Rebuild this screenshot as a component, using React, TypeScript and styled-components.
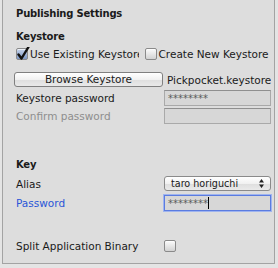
import styled, { createGlobalStyle } from "styled-components";

const GlobalStyle = createGlobalStyle`
  html, body {
    margin: 0;
    padding: 0;
    background: #e4e4e4;
  }
  body {
    font-family: "DejaVu Sans", "Liberation Sans", sans-serif;
    font-size: 10.5px;
    color: #1a1a1a;
  }
`;

const Panel = styled.div`
  box-sizing: border-box;
  margin-left: 2px;
  width: 273px;
  height: 264px;
  padding: 0 0 0 13px;
  background: #dddddd;
  border: 1px solid #a3a3a3;
  border-top: none;
  display: flex;
  flex-direction: column;
  overflow: hidden;
`;

const Title = styled.div<{ $top: number }>`
  margin-top: ${(p) => p.$top}px;
  height: 16px;
  line-height: 16px;
  font-weight: bold;
  font-size: 10px;
  letter-spacing: -0.2px;
  white-space: nowrap;
`;

const Row = styled.div<{ $top: number; $h: number }>`
  margin-top: ${(p) => p.$top}px;
  height: ${(p) => p.$h}px;
  display: grid;
  grid-template-columns: 148px 107px;
  align-items: center;
  white-space: nowrap;
`;

const ToggleRow = styled.div<{ $top: number }>`
  margin-top: ${(p) => p.$top}px;
  height: 14px;
  display: flex;
  align-items: center;
  gap: 6px;
  white-space: nowrap;
`;

const Toggle = styled.label<{ $w: number }>`
  width: ${(p) => p.$w}px;
  display: flex;
  align-items: center;
  gap: 2px;
  overflow: hidden;
`;

const Label = styled.span<{ $tone?: "dim" | "focus" }>`
  line-height: 14px;
  color: ${(p) =>
    p.$tone === "dim" ? "#8e8e8e" : p.$tone === "focus" ? "#2a56d8" : "#1a1a1a"};
`;

const Box = styled.span<{ $checked?: boolean }>`
  position: relative;
  flex: none;
  box-sizing: border-box;
  width: 12px;
  height: 12px;
  border: 1px solid #8a8a8a;
  border-radius: 2px;
  background: ${(p) =>
    p.$checked
      ? "linear-gradient(#c4d2ea, #7d98c6)"
      : "linear-gradient(#fbfbfb, #d2d2d2)"};
  box-shadow: inset 0 1px 0 rgba(255, 255, 255, 0.7);
`;

const Check = styled.svg`
  position: absolute;
  left: 0px;
  top: -3px;
  overflow: visible;
`;

const Button = styled.div`
  box-sizing: border-box;
  width: 149px;
  height: 15px;
  margin-left: -2px;
  border: 1px solid #808080;
  border-radius: 3px;
  background: linear-gradient(#ffffff, #f1f1f1 50%, #dedede 51%, #e9e9e9);
  text-align: center;
  line-height: 13px;
`;

const FileName = styled.span`
  margin-left: 3px;
  overflow: hidden;
`;

const Field = styled.div<{ $focus?: boolean }>`
  box-sizing: border-box;
  height: 16px;
  padding-left: 3px;
  background: #d7d7d7;
  border: 1px solid ${(p) => (p.$focus ? "#5b7ce0" : "#a9a9a9")};
  border-top-color: ${(p) => (p.$focus ? "#5b7ce0" : "#8f8f8f")};
  box-shadow: ${(p) => (p.$focus ? "0 0 0 1px #9fb4ef" : "none")};
  display: flex;
  align-items: center;
  font-size: 10px;
  color: #5a5a5a;
  letter-spacing: 0px;
`;

const Caret = styled.span`
  width: 1px;
  height: 12px;
  background: #000;
`;

const Popup = styled.div`
  box-sizing: border-box;
  height: 15px;
  padding: 0 6px 0 6px;
  border: 1px solid #8a8a8a;
  border-radius: 3px;
  background: linear-gradient(#ffffff, #f1f1f1 50%, #dedede 51%, #eaeaea);
  display: flex;
  align-items: center;
  justify-content: space-between;
  font-size: 9.6px;
`;

const CheckBox = ({ checked }: { checked?: boolean }) => (
  <Box $checked={checked}>
    {checked && (
      <Check width="12" height="14" viewBox="0 0 12 14">
        <path
          d="M1.5 8.5 L4.5 12.5 L11.5 1"
          fill="none"
          stroke="#111"
          strokeWidth="2.4"
          strokeLinecap="round"
          strokeLinejoin="round"
        />
      </Check>
    )}
  </Box>
);

const Arrows = () => (
  <svg width="5" height="9" viewBox="0 0 5 9">
    <path d="M2.5 0 L5 3.5 L0 3.5 Z M2.5 9 L5 5.5 L0 5.5 Z" fill="#222" />
  </svg>
);

export default function App() {
  return (
    <>
      <GlobalStyle />
      <Panel>
        <Title $top={6}>Publishing Settings</Title>
        <Title $top={7}>Keystore</Title>
        <ToggleRow $top={2}>
          <Toggle $w={123}>
            <CheckBox checked />
            <Label>Use Existing Keystore</Label>
          </Toggle>
          <Toggle $w={130}>
            <CheckBox />
            <Label>Create New Keystore</Label>
          </Toggle>
        </ToggleRow>
        <Row $top={11} $h={15}>
          <Button>Browse Keystore</Button>
          <FileName>Pickpocket.keystore</FileName>
        </Row>
        <Row $top={3} $h={16}>
          <Label>Keystore password</Label>
          <Field>********</Field>
        </Row>
        <Row $top={2} $h={16}>
          <Label $tone="dim">Confirm password</Label>
          <Field />
        </Row>
        <Title $top={33}>Key</Title>
        <Row $top={3} $h={15}>
          <Label>Alias</Label>
          <Popup>
            <span>taro horiguchi</span>
            <Arrows />
          </Popup>
        </Row>
        <Row $top={4} $h={16}>
          <Label $tone="focus">Password</Label>
          <Field $focus>
            ********
            <Caret />
          </Field>
        </Row>
        <Row $top={28} $h={14}>
          <Label>Split Application Binary</Label>
          <CheckBox />
        </Row>
      </Panel>
    </>
  );
}
